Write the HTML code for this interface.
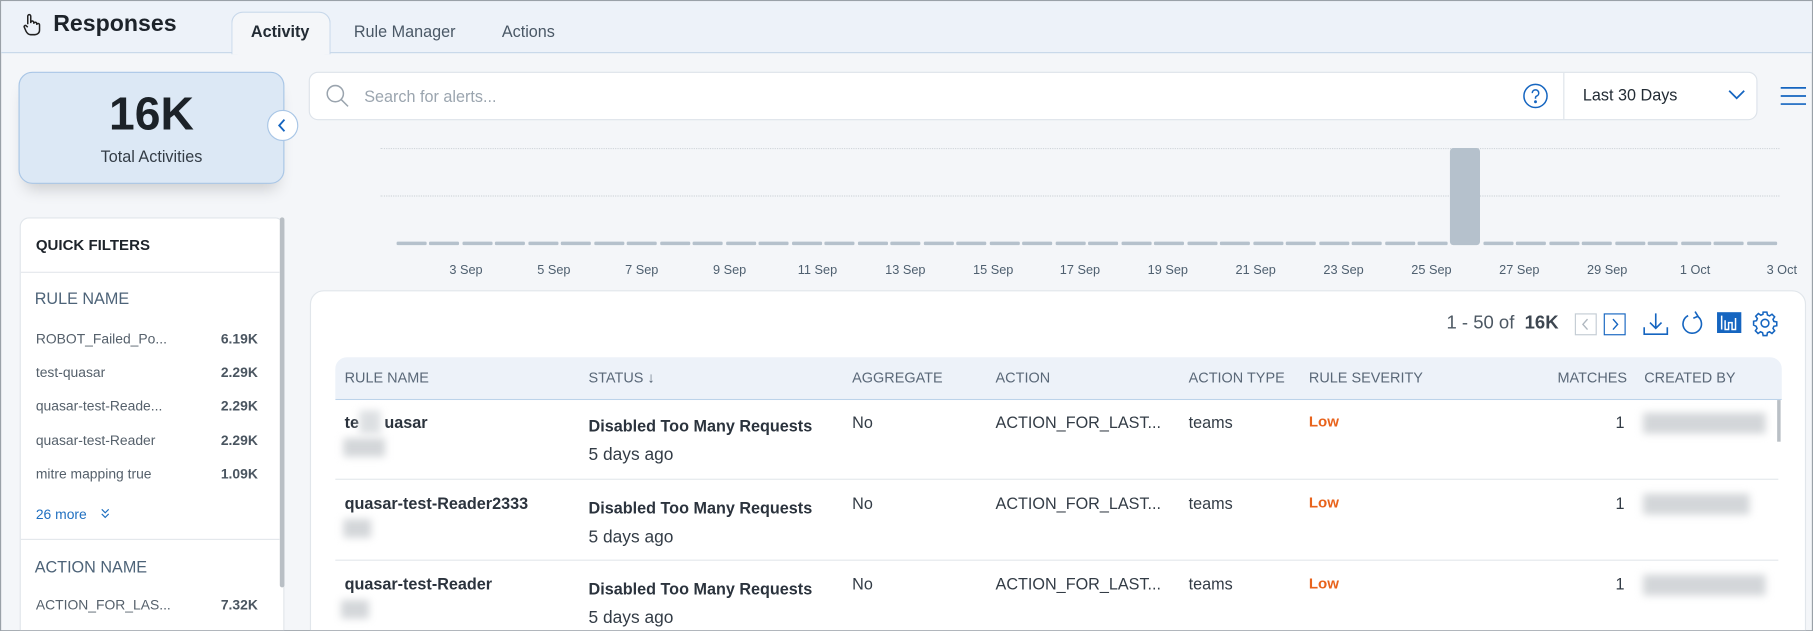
<!DOCTYPE html>
<html><head><meta charset="utf-8"><style>
*{box-sizing:border-box;margin:0;padding:0}
html,body{width:1813px;height:631px;overflow:hidden;background:#f4f6f9;font-family:"Liberation Sans",sans-serif}
#s{position:absolute;left:0;top:0;width:1568px;height:546px;transform:scale(1.15625);transform-origin:0 0;background:#f4f6f9;border:1px solid #9aa1a8;overflow:hidden}
.a{position:absolute;white-space:nowrap}
.hdr{left:0;top:0;width:1568px;height:45px;background:#edf2f9;border-bottom:1px solid #c8d8ea}
.tab{font-size:14px;color:#4a5866;top:18px}
.fl{font-size:12px;color:#55606b}
.fv{font-size:12px;font-weight:bold;color:#4a5560;right:20px}
.th{font-size:12.5px;color:#5a6878;top:319px}
.c{font-size:14px;color:#333c46}
.b{font-weight:bold;color:#2b333d}
.blur{background:#d3d6d9;filter:blur(3.5px);position:absolute}
.lbl{font-size:11px;color:#4f6070;top:227px;transform:translateX(-50%)}
</style></head><body><div id="s">
<div class="a hdr"></div>
<svg class="a" style="left:18px;top:10px" width="16" height="20" viewBox="0 0 16 20" fill="none" stroke="#222" stroke-width="1.3"><path d="M5 10V3a1.3 1.3 0 0 1 2.6 0v6M7.6 8.5a1.3 1.3 0 0 1 2.6 0v1a1.3 1.3 0 0 1 2.6 0v1a1.2 1.2 0 0 1 2.4 0v4.5c0 2.5-2 4-4 4H7.5c-2 0-3-1-4-3L2 12.5c-.5-1 .8-2 1.7-1.2L5 12.5"/></svg>
<div class="a" style="left:45px;top:9px;font-size:20px;font-weight:bold;color:#1d232a">Responses</div>
<div class="a" style="left:199px;top:9px;width:86px;height:37px;background:#f4f6f9;border:1px solid #c8d8ea;border-bottom:none;border-radius:10px 10px 0 0"></div>
<div class="a tab" style="left:216px;font-weight:bold;color:#222b34">Activity</div>
<div class="a tab" style="left:305px">Rule Manager</div>
<div class="a tab" style="left:433px">Actions</div>

<div class="a" style="left:15px;top:61px;width:230px;height:97px;background:#dce8f5;border:1px solid #a9c6e6;border-radius:12px;box-shadow:0 10px 14px -6px rgba(0,0,0,.18)"></div>
<div class="a" style="left:15px;top:76px;width:230px;text-align:center;font-size:40px;font-weight:bold;color:#1c2228">16K</div>
<div class="a" style="left:15px;top:126px;width:230px;text-align:center;font-size:14px;color:#333c46">Total Activities</div>
<div class="a" style="left:230px;top:94px;width:27px;height:27px;border-radius:50%;background:#fff;border:1px solid #a9c6e6"></div>
<svg class="a" style="left:238px;top:101px" width="10" height="13" viewBox="0 0 10 13"><path d="M7 1.5L2.5 6.5L7 11.5" stroke="#1565c0" stroke-width="1.6" fill="none"/></svg>

<div class="a" style="left:16px;top:187px;width:229px;height:370px;background:#fff;border:1px solid #e1e6eb;border-radius:8px 8px 0 0"></div>
<div class="a" style="left:241px;top:187px;width:4px;height:320px;background:#b9bfc5;border-radius:2px"></div>
<div class="a" style="left:30px;top:203px;font-size:13px;font-weight:bold;color:#1d232a">QUICK FILTERS</div>
<div class="a" style="left:17px;top:234px;width:224px;height:1px;background:#e4e8ec"></div>
<div class="a" style="left:29px;top:249px;font-size:14px;color:#4d6378">RULE NAME</div>
<div class="a fl" style="left:30px;top:285px">ROBOT_Failed_Po...</div><div class="a fv" style="left:190px;top:285px">6.19K</div>
<div class="a fl" style="left:30px;top:314px">test-quasar</div><div class="a fv" style="left:190px;top:314px">2.29K</div>
<div class="a fl" style="left:30px;top:343px">quasar-test-Reade...</div><div class="a fv" style="left:190px;top:343px">2.29K</div>
<div class="a fl" style="left:30px;top:373px">quasar-test-Reader</div><div class="a fv" style="left:190px;top:373px">2.29K</div>
<div class="a fl" style="left:30px;top:402px">mitre mapping true</div><div class="a fv" style="left:190px;top:402px">1.09K</div>
<div class="a" style="left:30px;top:437px;font-size:12px;color:#1f6fc0">26 more</div>
<svg class="a" style="left:85px;top:438px" width="10" height="10" viewBox="0 0 10 10" fill="none" stroke="#1f6fc0" stroke-width="1"><path d="M2 1.5l3 3 3-3M2 5.5l3 3 3-3"/></svg>
<div class="a" style="left:17px;top:465px;width:224px;height:1px;background:#e4e8ec"></div>
<div class="a" style="left:29px;top:481px;font-size:14px;color:#4d6378">ACTION NAME</div>
<div class="a fl" style="left:30px;top:515px">ACTION_FOR_LAS...</div><div class="a fv" style="left:190px;top:515px">7.32K</div>

<div class="a" style="left:266px;top:61px;width:1253px;height:42px;background:#fff;border:1px solid #dde3ea;border-radius:8px"></div>
<svg class="a" style="left:280px;top:71px" width="22" height="22" viewBox="0 0 22 22" fill="none" stroke="#9aa4ae" stroke-width="1.3"><circle cx="9" cy="9" r="7"/><path d="M14 14l6 6"/></svg>
<div class="a" style="left:314px;top:74px;font-size:14px;color:#9ba5af">Search for alerts...</div>
<svg class="a" style="left:1316px;top:71px" width="22" height="22" viewBox="0 0 22 22" fill="none" stroke="#1565c0" stroke-width="1.3"><circle cx="11" cy="11" r="10"/><path d="M8.2 8.5a2.8 2.8 0 1 1 3.8 2.6c-.7.3-1 .8-1 1.5v.8"/><circle cx="11" cy="16" r=".6" fill="#1565c0"/></svg>
<div class="a" style="left:1351px;top:62px;width:1px;height:40px;background:#dde3ea"></div>
<div class="a" style="left:1368px;top:73px;font-size:14px;color:#222b34">Last 30 Days</div>
<svg class="a" style="left:1493px;top:76px" width="16" height="10" viewBox="0 0 16 10"><path d="M1.5 1.5l6.5 6.5 6.5-6.5" stroke="#1565c0" stroke-width="1.5" fill="none"/></svg>
<svg class="a" style="left:1539px;top:74px" width="22" height="16" viewBox="0 0 22 16" stroke="#1565c0" stroke-width="1.5"><path d="M0 1h22M0 8h22M0 15h22"/></svg>

<div class="a" style="left:328px;top:127px;width:1210px;border-top:1px dotted #d0d5da"></div>
<div class="a" style="left:328px;top:168px;width:1210px;border-top:1px dotted #d0d5da"></div>
<svg class="a" style="left:328px;top:120px" width="1212" height="92">
<g fill="#b5c1cc">
<rect x="14" y="88" width="26" height="3" rx="1"/><rect x="42" y="88" width="26" height="3" rx="1"/><rect x="71" y="88" width="26" height="3" rx="1"/><rect x="99" y="88" width="26" height="3" rx="1"/><rect x="128" y="88" width="26" height="3" rx="1"/><rect x="156" y="88" width="26" height="3" rx="1"/><rect x="185" y="88" width="26" height="3" rx="1"/><rect x="213" y="88" width="26" height="3" rx="1"/><rect x="242" y="88" width="26" height="3" rx="1"/><rect x="270" y="88" width="26" height="3" rx="1"/><rect x="299" y="88" width="26" height="3" rx="1"/><rect x="327" y="88" width="26" height="3" rx="1"/><rect x="356" y="88" width="26" height="3" rx="1"/><rect x="384" y="88" width="26" height="3" rx="1"/><rect x="413" y="88" width="26" height="3" rx="1"/><rect x="441" y="88" width="26" height="3" rx="1"/><rect x="470" y="88" width="26" height="3" rx="1"/><rect x="498" y="88" width="26" height="3" rx="1"/><rect x="527" y="88" width="26" height="3" rx="1"/><rect x="555" y="88" width="26" height="3" rx="1"/><rect x="584" y="88" width="26" height="3" rx="1"/><rect x="612" y="88" width="26" height="3" rx="1"/><rect x="641" y="88" width="26" height="3" rx="1"/><rect x="669" y="88" width="26" height="3" rx="1"/><rect x="698" y="88" width="26" height="3" rx="1"/><rect x="726" y="88" width="26" height="3" rx="1"/><rect x="755" y="88" width="26" height="3" rx="1"/><rect x="783" y="88" width="26" height="3" rx="1"/><rect x="812" y="88" width="26" height="3" rx="1"/><rect x="840" y="88" width="26" height="3" rx="1"/><rect x="869" y="88" width="26" height="3" rx="1"/><rect x="897" y="88" width="26" height="3" rx="1"/><rect x="925" y="7" width="26" height="84" rx="3"/><rect x="954" y="88" width="26" height="3" rx="1"/><rect x="982" y="88" width="26" height="3" rx="1"/><rect x="1011" y="88" width="26" height="3" rx="1"/><rect x="1039" y="88" width="26" height="3" rx="1"/><rect x="1068" y="88" width="26" height="3" rx="1"/><rect x="1096" y="88" width="26" height="3" rx="1"/><rect x="1125" y="88" width="26" height="3" rx="1"/><rect x="1153" y="88" width="26" height="3" rx="1"/><rect x="1182" y="88" width="26" height="3" rx="1"/>
</g></svg>
<div class="a lbl" style="left:402px">3 Sep</div><div class="a lbl" style="left:478px">5 Sep</div><div class="a lbl" style="left:554px">7 Sep</div><div class="a lbl" style="left:630px">9 Sep</div><div class="a lbl" style="left:706px">11 Sep</div><div class="a lbl" style="left:782px">13 Sep</div><div class="a lbl" style="left:858px">15 Sep</div><div class="a lbl" style="left:933px">17 Sep</div><div class="a lbl" style="left:1009px">19 Sep</div><div class="a lbl" style="left:1085px">21 Sep</div><div class="a lbl" style="left:1161px">23 Sep</div><div class="a lbl" style="left:1237px">25 Sep</div><div class="a lbl" style="left:1313px">27 Sep</div><div class="a lbl" style="left:1389px">29 Sep</div><div class="a lbl" style="left:1465px">1 Oct</div><div class="a lbl" style="left:1540px">3 Oct</div>

<div class="a" style="left:267px;top:250px;width:1294px;height:310px;background:#fff;border:1px solid #e1e6eb;border-radius:12px"></div>
<div class="a" style="left:1250px;top:270px;font-size:16px;color:#4d5863">1 - 50 of &nbsp;<b style="color:#3d4650">16K</b></div>
<div class="a" style="left:1361px;top:270px;width:19px;height:19px;border:1px solid #c4ccd4"></div>
<svg class="a" style="left:1365px;top:274px" width="11" height="11"><path d="M7 1L3 5.5 7 10" stroke="#b0b8c0" stroke-width="1.2" fill="none"/></svg>
<div class="a" style="left:1386px;top:270px;width:19px;height:19px;border:1px solid #1565c0"></div>
<svg class="a" style="left:1390px;top:274px" width="11" height="11"><path d="M4 1l4 4.5L4 10" stroke="#1565c0" stroke-width="1.2" fill="none"/></svg>
<svg class="a" style="left:1420px;top:268px" width="22" height="22" viewBox="0 0 22 22" fill="none" stroke="#1565c0" stroke-width="1.4"><path d="M11 2v13M6 10l5 5 5-5M1 14v6h20v-6"/></svg>
<svg class="a" style="left:1452px;top:267px" width="22" height="24" viewBox="0 0 22 24" fill="none" stroke="#1565c0" stroke-width="1.4"><path d="M15 5.5A8 8 0 1 1 7 5M13 1.5l2.5 4-4 1.7"/></svg>
<div class="a" style="left:1484px;top:269px;width:21px;height:18px;background:#1565c0"></div>
<svg class="a" style="left:1484px;top:269px" width="21" height="18" stroke="#fff" stroke-width="1.3" fill="none"><path d="M4 3v12M7 7v8h3v-6h3v6h3V5"/></svg>
<svg class="a" style="left:1514px;top:267px" width="23" height="23" viewBox="0 0 24 24" fill="none" stroke="#1565c0" stroke-width="1.4"><circle cx="12" cy="12" r="3.5"/><path d="M10.3 2h3.4l.5 2.6 1.9.8 2.2-1.5 2.4 2.4-1.5 2.2.8 1.9 2.6.5v3.4l-2.6.5-.8 1.9 1.5 2.2-2.4 2.4-2.2-1.5-1.9.8-.5 2.6h-3.4l-.5-2.6-1.9-.8-2.2 1.5-2.4-2.4 1.5-2.2-.8-1.9L1.7 13.7v-3.4l2.6-.5.8-1.9-1.5-2.2 2.4-2.4 2.2 1.5 1.9-.8z"/></svg>

<div class="a" style="left:289px;top:308px;width:1251px;height:37px;background:#edf2f9;border-bottom:1px solid #bcd3ea;border-radius:10px 10px 0 0"></div>
<div class="a th" style="left:297px">RULE NAME</div>
<div class="a th" style="left:508px">STATUS ↓</div>
<div class="a th" style="left:736px">AGGREGATE</div>
<div class="a th" style="left:860px">ACTION</div>
<div class="a th" style="left:1027px">ACTION TYPE</div>
<div class="a th" style="left:1131px">RULE SEVERITY</div>
<div class="a th" style="left:1346px;width:59px;text-align:right">MATCHES</div>
<div class="a th" style="left:1421px">CREATED BY</div>
<div class="a" style="left:1536px;top:345px;width:3px;height:36px;background:#b9bfc5"></div>
<div class="a" style="left:289px;top:413px;width:1248px;height:1px;background:#e4e8ec"></div>
<div class="a" style="left:289px;top:483px;width:1248px;height:1px;background:#e4e8ec"></div>

<div class="a c b" style="left:297px;top:356px">te<span style="display:inline-block;width:22px"></span>uasar</div>
<div class="blur" style="left:310px;top:354px;width:18px;height:20px;background:#dcdfe2"></div>
<div class="blur" style="left:296px;top:378px;width:36px;height:16px"></div>
<div class="a c b" style="left:297px;top:426px">quasar-test-Reader2333</div>
<div class="blur" style="left:296px;top:448px;width:24px;height:16px"></div>
<div class="a c b" style="left:297px;top:496px">quasar-test-Reader</div>
<div class="blur" style="left:294px;top:518px;width:24px;height:16px"></div>

<div class="a c b" style="left:508px;top:359px">Disabled Too Many Requests</div><div class="a c" style="left:508px;top:384px;font-size:15px">5 days ago</div>
<div class="a c b" style="left:508px;top:430px">Disabled Too Many Requests</div><div class="a c" style="left:508px;top:455px;font-size:15px">5 days ago</div>
<div class="a c b" style="left:508px;top:500px">Disabled Too Many Requests</div><div class="a c" style="left:508px;top:525px;font-size:15px">5 days ago</div>

<div class="a c" style="left:736px;top:356px">No</div><div class="a c" style="left:736px;top:426px">No</div><div class="a c" style="left:736px;top:496px">No</div>
<div class="a c" style="left:860px;top:356px">ACTION_FOR_LAST...</div><div class="a c" style="left:860px;top:426px">ACTION_FOR_LAST...</div><div class="a c" style="left:860px;top:496px">ACTION_FOR_LAST...</div>
<div class="a c" style="left:1027px;top:356px">teams</div><div class="a c" style="left:1027px;top:426px">teams</div><div class="a c" style="left:1027px;top:496px">teams</div>
<div class="a" style="left:1131px;top:356px;font-size:13px;font-weight:bold;color:#e8631c">Low</div><div class="a" style="left:1131px;top:426px;font-size:13px;font-weight:bold;color:#e8631c">Low</div><div class="a" style="left:1131px;top:496px;font-size:13px;font-weight:bold;color:#e8631c">Low</div>
<div class="a c" style="left:1380px;top:356px;width:24px;text-align:right">1</div><div class="a c" style="left:1380px;top:426px;width:24px;text-align:right">1</div><div class="a c" style="left:1380px;top:496px;width:24px;text-align:right">1</div>
<div class="blur" style="left:1420px;top:356px;width:106px;height:18px"></div>
<div class="blur" style="left:1420px;top:426px;width:92px;height:18px"></div>
<div class="blur" style="left:1420px;top:496px;width:106px;height:18px"></div>
</div></body></html>
